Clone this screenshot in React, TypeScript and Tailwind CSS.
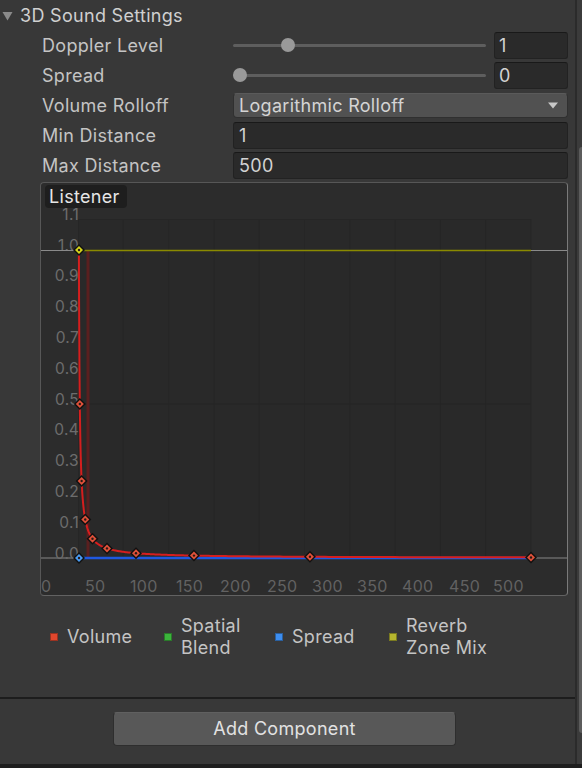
import React from "react";

const X0 = 78;
const PX = 0.906;
const Y0 = 558;
const PY = 308;
const xd = (d: number) => X0 + PX * d;
const yv = (v: number) => Y0 - PY * v;

function curvePath() {
  const pts: string[] = [];
  for (let i = 0; i <= 400; i++) {
    const d = Math.pow(500, i / 400);
    const v = 1 / d;
    pts.push(`${i === 0 ? "M" : "L"}${xd(d).toFixed(2)} ${yv(v).toFixed(2)}`);
  }
  return pts.join(" ");
}

function Key({ x, y, color }: { x: number; y: number; color: string }) {
  return (
    <g>
      <polygon points={`${x},${y - 6} ${x + 6},${y} ${x},${y + 6} ${x - 6},${y}`} fill="#111" />
      <polygon points={`${x},${y - 4} ${x + 4},${y} ${x},${y + 4} ${x - 4},${y}`} fill={color} />
      <circle cx={x} cy={y} r={1.2} fill="#2a1a14" />
    </g>
  );
}

function Graph() {
  const yLabels = [1.1, 1.0, 0.9, 0.8, 0.7, 0.6, 0.5, 0.4, 0.3, 0.2, 0.1, 0.0];
  const xLabels: [string, number][] = [
    ["0", 41], ["50", 85], ["100", 130], ["150", 176], ["200", 220], ["250", 267],
    ["300", 312], ["350", 357], ["400", 402], ["450", 449], ["500", 493],
  ];
  const keys = [2, 4, 8, 16, 32, 64, 128, 256];
  const grid: number[] = [];
  for (let k = 1; k <= 9; k++) grid.push(X0 + 45.3 * k);
  return (
    <svg className="absolute inset-0 w-full h-full" viewBox="41 183 526 412">
      <rect x={79} y={219} width={452} height={339} fill="#292929" />
      {grid.map((g) => (
        <line key={g} x1={g} y1={219} x2={g} y2={558} stroke="#262626" strokeWidth={1} />
      ))}
      <line x1={79} y1={219.5} x2={531} y2={219.5} stroke="#262626" />
      <line x1={79} y1={404} x2={531} y2={404} stroke="#252525" />
      <line x1={78.5} y1={219} x2={78.5} y2={558} stroke="#262626" />
      <line x1={531} y1={219} x2={531} y2={558} stroke="#262626" />
      {yLabels.map((v) => (
        <text key={v} x={79} y={yv(v) + 0.5} textAnchor="end" fontFamily="Inter, sans-serif" fontSize={15.5} letterSpacing={0.3} fill="#6c6c6c">
          {v.toFixed(1)}
        </text>
      ))}
      {xLabels.map(([t, x]) => (
        <text key={t} x={x} y={592} fontFamily="Inter, sans-serif" fontSize={16} letterSpacing={0.3} fill="#626262">
          {t}
        </text>
      ))}
      <line x1={41} y1={250.5} x2={567} y2={250.5} stroke="#8a8a8a" strokeWidth={1} />
      <line x1={41} y1={558} x2={567} y2={558} stroke="#696969" strokeWidth={1.5} />
      <line x1={88} y1={251} x2={88} y2={558} stroke="#5a1f1f" strokeWidth={3} />
      <line x1={79} y1={250.5} x2={531} y2={250.5} stroke="#8a8a00" strokeWidth={1.5} />
      <line x1={79} y1={558} x2={531} y2={558} stroke="#1f58e0" strokeWidth={2.5} />
      <path d={curvePath()} fill="none" stroke="#d61e1e" strokeWidth={2} />
      {keys.map((d) => (
        <Key key={d} x={xd(d)} y={yv(1 / d)} color="#e0513a" />
      ))}
      <Key x={531} y={557.5} color="#e0513a" />
      <Key x={79} y={250} color="#d4d41c" />
      <Key x={79} y={558} color="#4a9cf2" />
    </svg>
  );
}

function Field({ w, children }: { w: string; children?: React.ReactNode }) {
  return (
    <div className={`${w} h-[27px] rounded-[3px] bg-[#2a2a2a] border border-[#222222] border-t-[#191919] pl-[4px] flex items-center text-[#d2d2d2]`}>
      {children}
    </div>
  );
}

function SliderRow({ label, knobLeft, value }: { label: string; knobLeft: number; value: string }) {
  return (
    <div className="h-[27px] flex items-center">
      <div className="w-[233px] pl-[42px]">{label}</div>
      <div className="relative w-[253px] h-[27px] flex items-center">
        <div className="w-full h-[3px] bg-[#5e5e5e] rounded-full" />
        <div
          className="absolute top-[6px] w-[14px] h-[14px] rounded-full bg-[#999999]"
          style={{ left: knobLeft }}
        />
      </div>
      <div className="ml-[8px]">
        <Field w="w-[74px]">{value}</Field>
      </div>
    </div>
  );
}

export default function App() {
  return (
    <div className="w-[582px] h-[768px] bg-[#383838] flex flex-col overflow-hidden font-[family-name:Inter,sans-serif] text-[18px] leading-[22px] tracking-[0.3px] text-[#c4c4c4]">
      <div className="flex flex-row h-[764px]">
        <div className="w-[575px] flex flex-col">
          <div className="h-[32px] flex items-center">
            <svg className="ml-[2px] w-[11px] h-[10px]" viewBox="0 0 11 10">
              <path d="M0.5 1 L10.5 1 L5.5 9.5 Z" fill="#8a8a8a" />
            </svg>
            <span className="ml-[7px] text-[#d0d0d0]">3D Sound Settings</span>
          </div>
          <div className="flex flex-col gap-[3px]">
            <SliderRow label="Doppler Level" knobLeft={48} value="1" />
            <SliderRow label="Spread" knobLeft={0} value="0" />
            <div className="h-[27px] flex items-center">
              <div className="w-[233px] pl-[42px]">Volume Rolloff</div>
              <div className="w-[335px] h-[25px] rounded-[4px] bg-[#515151] border border-[#303030] border-t-[#5a5a5a] pl-[5px] pr-[9px] flex items-center justify-between text-[#d4d4d4]">
                <span>Logarithmic Rolloff</span>
                <svg className="w-[10px] h-[7px]" viewBox="0 0 10 7">
                  <path d="M0 0.5 L10 0.5 L5 6.5 Z" fill="#c8c8c8" />
                </svg>
              </div>
            </div>
            <div className="h-[27px] flex items-center">
              <div className="w-[233px] pl-[42px]">Min Distance</div>
              <Field w="w-[335px]">
                <span className="pl-[1px]">1</span>
              </Field>
            </div>
            <div className="h-[27px] flex items-center">
              <div className="w-[233px] pl-[42px]">Max Distance</div>
              <Field w="w-[335px]">
                <span className="pl-[1px]">500</span>
              </Field>
            </div>
          </div>
          <div className="relative mt-[3px] ml-[40px] w-[528px] h-[414px] rounded-[4px] bg-[#2c2c2c] border border-[#575757] border-r-[#7a7a7a] border-b-[#626262] overflow-hidden">
            <Graph />
            <div className="absolute left-[4px] top-[2px] w-[82px] h-[23px] rounded-[4px] bg-[#1e1e1e] pl-[4px] flex items-center text-[#e6e6e6]">
              Listener
            </div>
          </div>
          <div className="pt-[19px] pl-[50px] flex flex-row h-[63px]">
            <div className="w-[114px] flex items-center">
              <div className="w-[8px] h-[8px] bg-[#e2472d] border border-[#9a3322]" />
              <span className="ml-[9px]">Volume</span>
            </div>
            <div className="w-[111px] flex items-center">
              <div className="w-[8px] h-[8px] bg-[#3bb43b] border border-[#2a7a2a]" />
              <span className="ml-[9px] w-[80px]">Spatial Blend</span>
            </div>
            <div className="w-[114px] flex items-center">
              <div className="w-[8px] h-[8px] bg-[#3d8ef0] border border-[#2a60a0]" />
              <span className="ml-[9px]">Spread</span>
            </div>
            <div className="w-[120px] flex items-center">
              <div className="w-[8px] h-[8px] bg-[#b5b52e] border border-[#7a7a20]" />
              <span className="ml-[9px] w-[90px]">Reverb Zone Mix</span>
            </div>
          </div>
          <div className="mt-[38px] h-[2px] bg-[#1d1d1d]" />
          <div className="mt-[13px] ml-[113px] w-[343px] h-[34px] rounded-[4px] bg-[#585858] border border-[#2e2e2e] border-t-[#606060] flex items-center justify-center text-[#e2e2e2]">
            Add Component
          </div>
        </div>
        <div className="w-[7px] flex flex-row">
          <div className="w-[2px] h-full bg-[#2b2b2b]" />
          <div className="w-[5px] h-full bg-[#3b3b3b] flex flex-col">
            <div className="mt-[147px] ml-[2px] w-[3px] h-[586px] rounded-l-[3px] bg-[#5c5c5c]" />
          </div>
        </div>
      </div>
      <div className="h-[4px] bg-[#1e1e1e]" />
    </div>
  );
}
